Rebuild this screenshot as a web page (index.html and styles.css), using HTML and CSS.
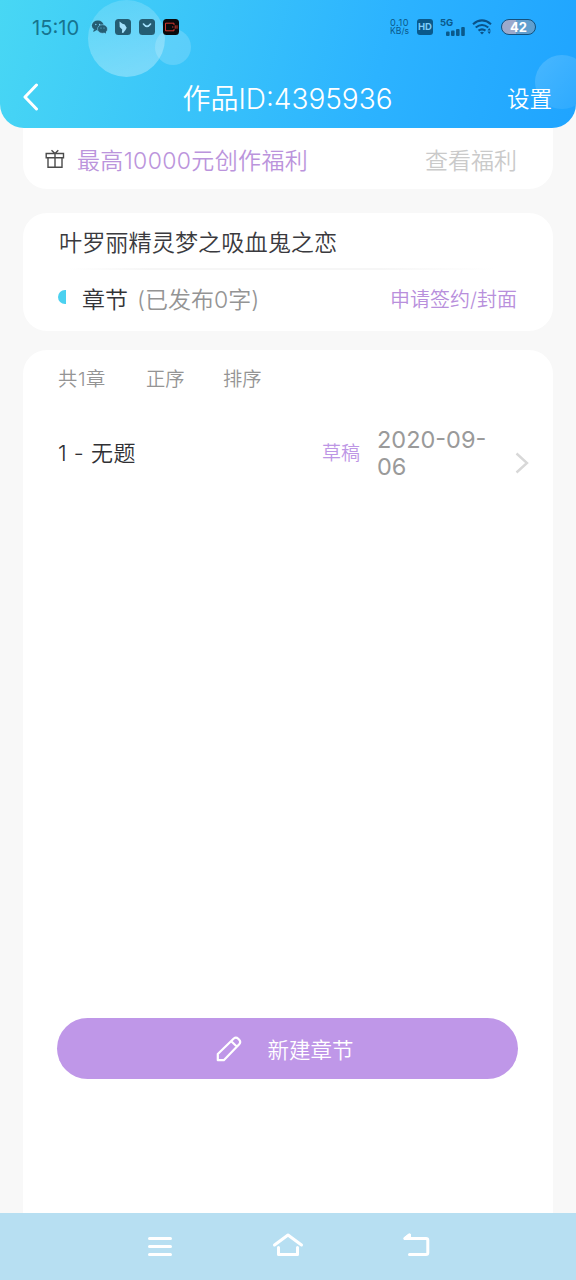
FILE: index.html
```html
<!DOCTYPE html>
<html lang="zh-CN">
<head>
<meta charset="utf-8">
<title>作品ID:4395936</title>
<link rel="stylesheet" href="styles.css">
</head>
<body>
<div class="screen">
  <header class="header">
    <svg class="bubbles" viewBox="0 0 576 128" aria-hidden="true">
      <defs>
        <linearGradient id="b1" x1="0" y1="0" x2="0.3" y2="1"><stop offset="0" stop-color="#fff" stop-opacity=".13"/><stop offset="1" stop-color="#fff" stop-opacity=".3"/></linearGradient>
        <linearGradient id="b2" x1="0" y1="0" x2="1" y2="1"><stop offset="0" stop-color="#fff" stop-opacity=".17"/><stop offset="1" stop-color="#fff" stop-opacity=".05"/></linearGradient>
      </defs>
      <circle cx="173" cy="47" r="18" fill="#fff" fill-opacity=".17"/>
      <circle cx="126.500" cy="38.500" r="38.500" fill="url(#b1)"/>
      <circle cx="562" cy="82" r="27" fill="url(#b2)"/>
    </svg>
    <div class="status">
      <span class="time">15:10</span>
      <svg class="apps" viewBox="0 0 90 18" width="90" height="18" aria-hidden="true">
        <g fill="#255d73">
          <ellipse cx="6.800" cy="7.500" rx="5.900" ry="5.100"/><path d="M3 11l-.8 3 3-1.500z"/>
          <ellipse cx="11.500" cy="11" rx="5" ry="4.300" stroke="#78d1f7" stroke-width=".6"/><path d="M13 14l2 1.700-.3-2.700z"/>
          <rect x="24" y="1" width="16" height="16" rx="3.500"/><rect x="48" y="1" width="16" height="16" rx="3.500"/>
        </g>
        <g fill="#78d1f7"><circle cx="4.800" cy="6.500" r=".7"/><circle cx="8.600" cy="6.500" r=".7"/><circle cx="10" cy="10" r=".5"/><circle cx="13" cy="10" r=".5"/></g>
        <path d="M28.500 3.500l3 2.300 2.200.7 2 3.300-1.200 2.300-2.300 3-1.300-.3.300-3.200-2.500-2.700z" fill="#a4e1fc"/>
        <path d="M52.500 6q3.500 4.800 7 0" fill="none" stroke="#a4e1fc" stroke-width="1.600" stroke-linecap="round"/>
        <rect x="72" y="1" width="16" height="16" rx="3.500" fill="#09090c"/>
        <path d="M83 7V5.200H74.500v7.600H83V11M81 9h1.400M84.200 7.300v3.400M86 7.300v3.400" fill="none" stroke="#e43c32" stroke-width=".9"/>
      </svg>
      <span class="status-gap"></span>
      <span class="speed"><span>0.10</span><span>KB/s</span></span>
      <span class="hd">HD</span>
      <span class="cell"><span class="net">5G</span>
        <svg viewBox="0 0 19 9" width="19" height="9" fill="#0a598b"><rect y="4.500" width="3.600" height="4.500" rx="1"/><rect x="5" y="3.500" width="3.600" height="5.500" rx="1"/><rect x="10" y="2" width="3.600" height="7" rx="1"/><rect x="15.200" width="3.600" height="9" rx="1"/></svg>
      </span>
      <svg class="wifi" viewBox="0 0 20 16" width="20" height="16" fill="none" stroke="#0a5289" stroke-width="2.100"><path d="M1 5.200q9-7.500 18 0M3.700 8.500q6.300-5 12.600 0M6.500 11.600q3.500-2.600 7 0"/><path d="M8 13.500l2 2 2-2q-2-1.500-4 0z" fill="#0a5289" stroke="none"/><path d="M15.500 11.500l1.700-2.500 1.700 2.500zM15.500 12.500l1.700 2.500 1.700-2.500z" fill="#0a5289" stroke="none"/></svg>
      <span class="battery">42</span>
    </div>
    <div class="titlebar">
      <svg class="back" viewBox="0 0 16 28" width="16" height="28"><path d="M13.500 2L2 14l11.500 12" fill="none" stroke="#fff" stroke-width="3" stroke-linecap="round" stroke-linejoin="round"/></svg>
      <h1 class="title">作品ID:4395936</h1>
      <span class="settings">设置</span>
    </div>
  </header>

  <main class="content">
    <section class="card benefit">
      <svg class="gift" viewBox="0 0 20 20" width="20" height="20" fill="none" stroke="#4b4b4b" stroke-width="1.400"><path d="M1.200 4.500h17.300v4.200H1.200zM3 8.700h14v9.600H3zM10 4.500v13.800M6.500 1.200l3.500 3.300 3.300-3.300"/></svg>
      <span class="benefit-text">最高10000元创作福利</span>
      <span class="benefit-link">查看福利</span>
    </section>

    <section class="card work">
      <div class="work-name">叶罗丽精灵梦之吸血鬼之恋</div>
      <div class="divider"></div>
      <div class="work-row">
        <span class="half-dot"></span>
        <span class="chapter">章节</span>
        <span class="published">(已发布0字)</span>
        <span class="apply">申请签约/封面</span>
      </div>
    </section>

    <section class="card list">
      <div class="filters"><span class="count">共1章</span><span class="order">正序</span><span>排序</span></div>
      <div class="entry">
        <span class="entry-name">1 - 无题</span>
        <span class="draft">草稿</span>
        <span class="date">2020-09-06</span>
        <svg class="chevron" viewBox="0 0 14 22" width="14" height="22"><path d="M1.500 1.500L12 11 1.500 20.500" fill="none" stroke="#d8d8d8" stroke-width="2.400"/></svg>
      </div>
      <button class="create">
        <svg viewBox="0 0 26 26" width="26" height="26" fill="none" stroke="#fff" stroke-width="2.200" stroke-linejoin="round"><path d="M1.800 24.200V18L17.800 2.500q2.200-1.800 4.400.3l1 1q2 2.200 0 4.400L7.800 24.200zM15.500 5.500l5.500 5.300"/></svg>
        <span>新建章节</span>
      </button>
    </section>
  </main>

  <nav class="navbar">
    <svg viewBox="0 0 32 28" width="32" height="28"><path d="M5.500 6.500h21M5.500 14.500h21M5.500 22.500h21"/></svg>
    <svg viewBox="0 0 32 28" width="32" height="28"><path d="M2.500 13L16 3l13.500 10M6.500 15.500V22.500h19V15.500"/></svg>
    <svg viewBox="0 0 32 28" width="32" height="28"><path d="M9.500 3L5 6.500H26q1.800 0 1.800 1.800v12.400q0 1.800-1.800 1.800H9.500"/><path class="tip" d="M5 6.500L9.500 3v3.500z"/></svg>
  </nav>
</div>
</body>
</html>
```

FILE: styles.css
```css
* { box-sizing: border-box; }
body {
  margin: 0;
  background: #f8f8f8;
  font-family: Inter, "Noto Sans CJK SC", sans-serif;
  font-weight: 350;
  white-space: nowrap;
}
svg { display: block; flex: none; }
.screen { width: 576px; height: 1280px; display: flex; flex-direction: column; overflow: hidden; }

.header {
  position: relative;
  height: 128px;
  flex: none;
  overflow: hidden;
  border-radius: 0 0 24px 24px;
  background: linear-gradient(105deg, #48d7f4 0%, #38c2fa 38%, #2cb3ff 65%, #1fa4ff 100%);
}
.bubbles { position: absolute; inset: 0; width: 576px; height: 128px; }
.status { position: relative; display: flex; align-items: center; height: 54px; padding: 0 40px 0 32px; color: #0a598b; font-weight: 400; }
.time { width: 59px; font-size: 20.2px; line-height: 24px; color: #17748f; padding-top: 1px; }
.status-gap { flex: 1; }
.speed { display: flex; flex-direction: column; width: 27px; font-size: 8.6px; line-height: 9px; }
.speed span:first-child { font-size: 9.2px; letter-spacing: .5px; }
.hd { width: 16px; height: 16px; border-radius: 3px; background: #0a598b; color: #7dcdfa; font-size: 9.5px; line-height: 16px; font-weight: 700; text-align: center; margin-right: 7px; }
.cell { display: flex; flex-direction: column; width: 32px; height: 17px; }
.net { font-size: 9.5px; line-height: 8px; font-weight: 700; }
.cell svg { margin-left: 6px; }
.wifi { margin-right: 9px; }
.battery {
  width: 35px;
  height: 16px;
  border: 1.5px solid #14507c;
  border-radius: 8px;
  background: linear-gradient(90deg, #9ba9cc 0 43%, #609fcf 43%);
  color: #fff;
  font-size: 13px;
  line-height: 14px;
  font-weight: 700;
  text-align: center;
}
.titlebar { position: relative; display: grid; grid-template-columns: 100px 1fr 100px; align-items: center; height: 74px; padding: 0 24px 0 23px; color: #fff; }
.back { margin-top: 12px; }
.title { margin: 15px 0 0; font-size: 28px; font-weight: 350; line-height: 40px; text-align: center; }
.settings { margin-top: 16px; font-size: 22.5px; line-height: 30px; text-align: right; }

.content { flex: 1; display: flex; flex-direction: column; padding: 0 23px; min-height: 0; }
.card { background: #fff; border-radius: 24px; flex: none; }
.benefit { display: flex; align-items: center; height: 61px; padding: 0 36px 0 22px; border-radius: 0 0 24px 24px; font-size: 23px; }
.gift { margin: 0 12px 0 0; }
.benefit-text { color: #bb94dc; letter-spacing: .35px; }
.benefit-link { margin-left: auto; color: #cacaca; }

.work { height: 118px; margin-top: 24px; padding: 0 36px; }
.work-name { height: 55px; padding-top: 13px; font-size: 23.2px; line-height: 34px; color: #3a3a3e; }
.divider { height: 2px; background: linear-gradient(90deg, transparent 2%, #f6f6f6 20%, #f6f6f6 70%, transparent 95%); }
.work-row { display: flex; align-items: center; height: 56px; font-size: 23px; }
.half-dot { width: 8px; height: 14px; border-radius: 8px 0 0 8px; background: #4bd1f0; margin: -2px 16px 0 -1px; }
.chapter { color: #333337; margin-right: 9px; }
.published { color: #949494; }
.apply { margin-left: auto; font-size: 20px; color: #b88fdc; }

.list { flex: 1; display: flex; flex-direction: column; margin-top: 19px; padding: 0 24px 0 35px; border-radius: 24px 24px 0 0; }
.filters { display: flex; height: 56px; align-items: center; font-size: 19.3px; color: #949494; }
.count { width: 88px; letter-spacing: .6px; }
.order { width: 77px; }
.entry { display: flex; align-items: center; height: 94px; font-size: 22px; color: #303034; }
.entry > * { flex: none; }
.entry-name { width: 264px; margin-top: -4px; letter-spacing: .5px; }
.draft { width: 55px; margin-top: -4px; font-size: 19px; color: #bd96e5; }
.date { width: 120px; margin-top: -1px; font-size: 23.5px; line-height: 27px; font-weight: 400; color: #9a9a9a; white-space: normal; }
.chevron { margin: 20px 0 0 17.5px; }
.create {
  display: flex;
  align-items: center;
  justify-content: center;
  gap: 25px;
  width: 461px;
  height: 61px;
  margin: 518px 0 0 -.6px;
  padding: 0 6px 0 0;
  border: 0;
  border-radius: 31px;
  background: #bf97e8;
  color: #fff;
  font: inherit;
  font-size: 21.5px;
}

.navbar { flex: none; display: flex; justify-content: center; gap: 96px; height: 67px; padding-top: 19px; background: #b7dff2; }
.navbar path { fill: none; stroke: #fff; stroke-width: 3; stroke-linecap: round; stroke-linejoin: round; }
.navbar .tip { fill: #fff; }
```
